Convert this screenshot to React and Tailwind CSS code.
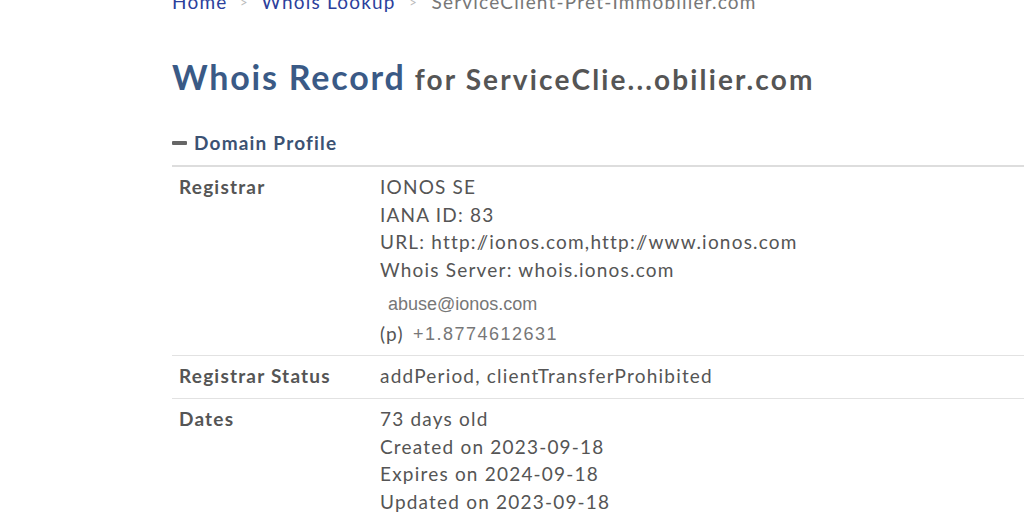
import { Fragment } from "react";

// Whois record page, scrolled slightly so the breadcrumb is clipped at the top.
const Slashes = () => (
  <>
    <span className="tracking-[-5.8px]">/</span>/
  </>
);

const rows = [
  {
    label: "Registrar",
    lines: [
      "IONOS SE",
      "IANA ID: 83",
      <>
        URL: http:<Slashes />ionos.com,http:<Slashes />www.ionos.com
      </>,
      "Whois Server: whois.ionos.com",
    ],
    contact: true,
  },
  { label: "Registrar Status", lines: ["addPeriod, clientTransferProhibited"] },
  {
    label: "Dates",
    lines: [
      "73 days old",
      "Created on 2023-09-18",
      "Expires on 2024-09-18",
      "Updated on 2023-09-18",
    ],
  },
];

function Crumb({ children, current }) {
  return (
    <span className={current ? "text-[#777]" : "text-[#2c3f9c]"}>{children}</span>
  );
}

export default function App() {
  return (
    <div className="h-[520px] w-[1024px] overflow-hidden bg-white font-['Lato',sans-serif] text-[#555]">
      <div className="-mt-[11px] pl-[172px]">
        <nav className="flex items-center text-[19px] leading-[26px] tracking-[1.2px]">
          <Crumb>Home</Crumb>
          <span className="mx-[12.5px] text-[13px] text-[#bbb]">&gt;</span>
          <Crumb>Whois Lookup</Crumb>
          <span className="mx-[13.5px] text-[13px] text-[#bbb]">&gt;</span>
          <Crumb current>ServiceClient-Pret-Immobilier.com</Crumb>
        </nav>

        <h1 className="mt-[40px] flex items-baseline gap-[9px] font-bold leading-[44px]">
          <span className="text-[34px] tracking-[1.8px] text-[#3a5a86]">Whois Record</span>
          <span className="text-[28px] tracking-[2.15px] text-[#555]">
            for ServiceClie...obilier.com
          </span>
        </h1>

        <div className="mt-[29px] flex items-center gap-[7px] border-b-2 border-[#ddd] pb-[9px]">
          <span className="h-[4px] w-[15px] rounded-[1px] bg-[#666]" />
          <span className="text-[19px] font-bold leading-[26px] tracking-[1.2px] text-[#3b5273]">
            Domain Profile
          </span>
        </div>

        <div className="grid grid-cols-[208px_1fr] text-[19px] leading-[27.6px] tracking-[1.2px]">
          {rows.map((r, i) => {
            const pad = i === 0 ? "pt-[6px] pb-[7px]" : "pt-[6px] pb-[8px]";
            const line = i < rows.length - 1 ? "border-b border-[#e2e2e2]" : "";
            return (
              <Fragment key={r.label}>
                <div className={`pl-[7px] font-bold ${pad} ${line}`}>{r.label}</div>
                <div className={`${pad} ${line}`}>
                  {r.lines.map((l, j) => (
                    <div key={j}>{l}</div>
                  ))}
                  {r.contact && (
                    <div className="font-['Liberation_Sans',sans-serif] text-[18px] tracking-normal text-[#777]">
                      <div className="mt-[7px] pl-[8px] leading-[29px]">abuse@ionos.com</div>
                      <div className="flex h-[29px] items-center">
                        <span className="w-[33px] font-['Lato',sans-serif] text-[19px] leading-none tracking-[1.2px] text-[#555]">
                          (p)
                        </span>
                        <span className="leading-none tracking-[1.5px]">+1.8774612631</span>
                      </div>
                    </div>
                  )}
                </div>
              </Fragment>
            );
          })}
        </div>
      </div>
    </div>
  );
}
